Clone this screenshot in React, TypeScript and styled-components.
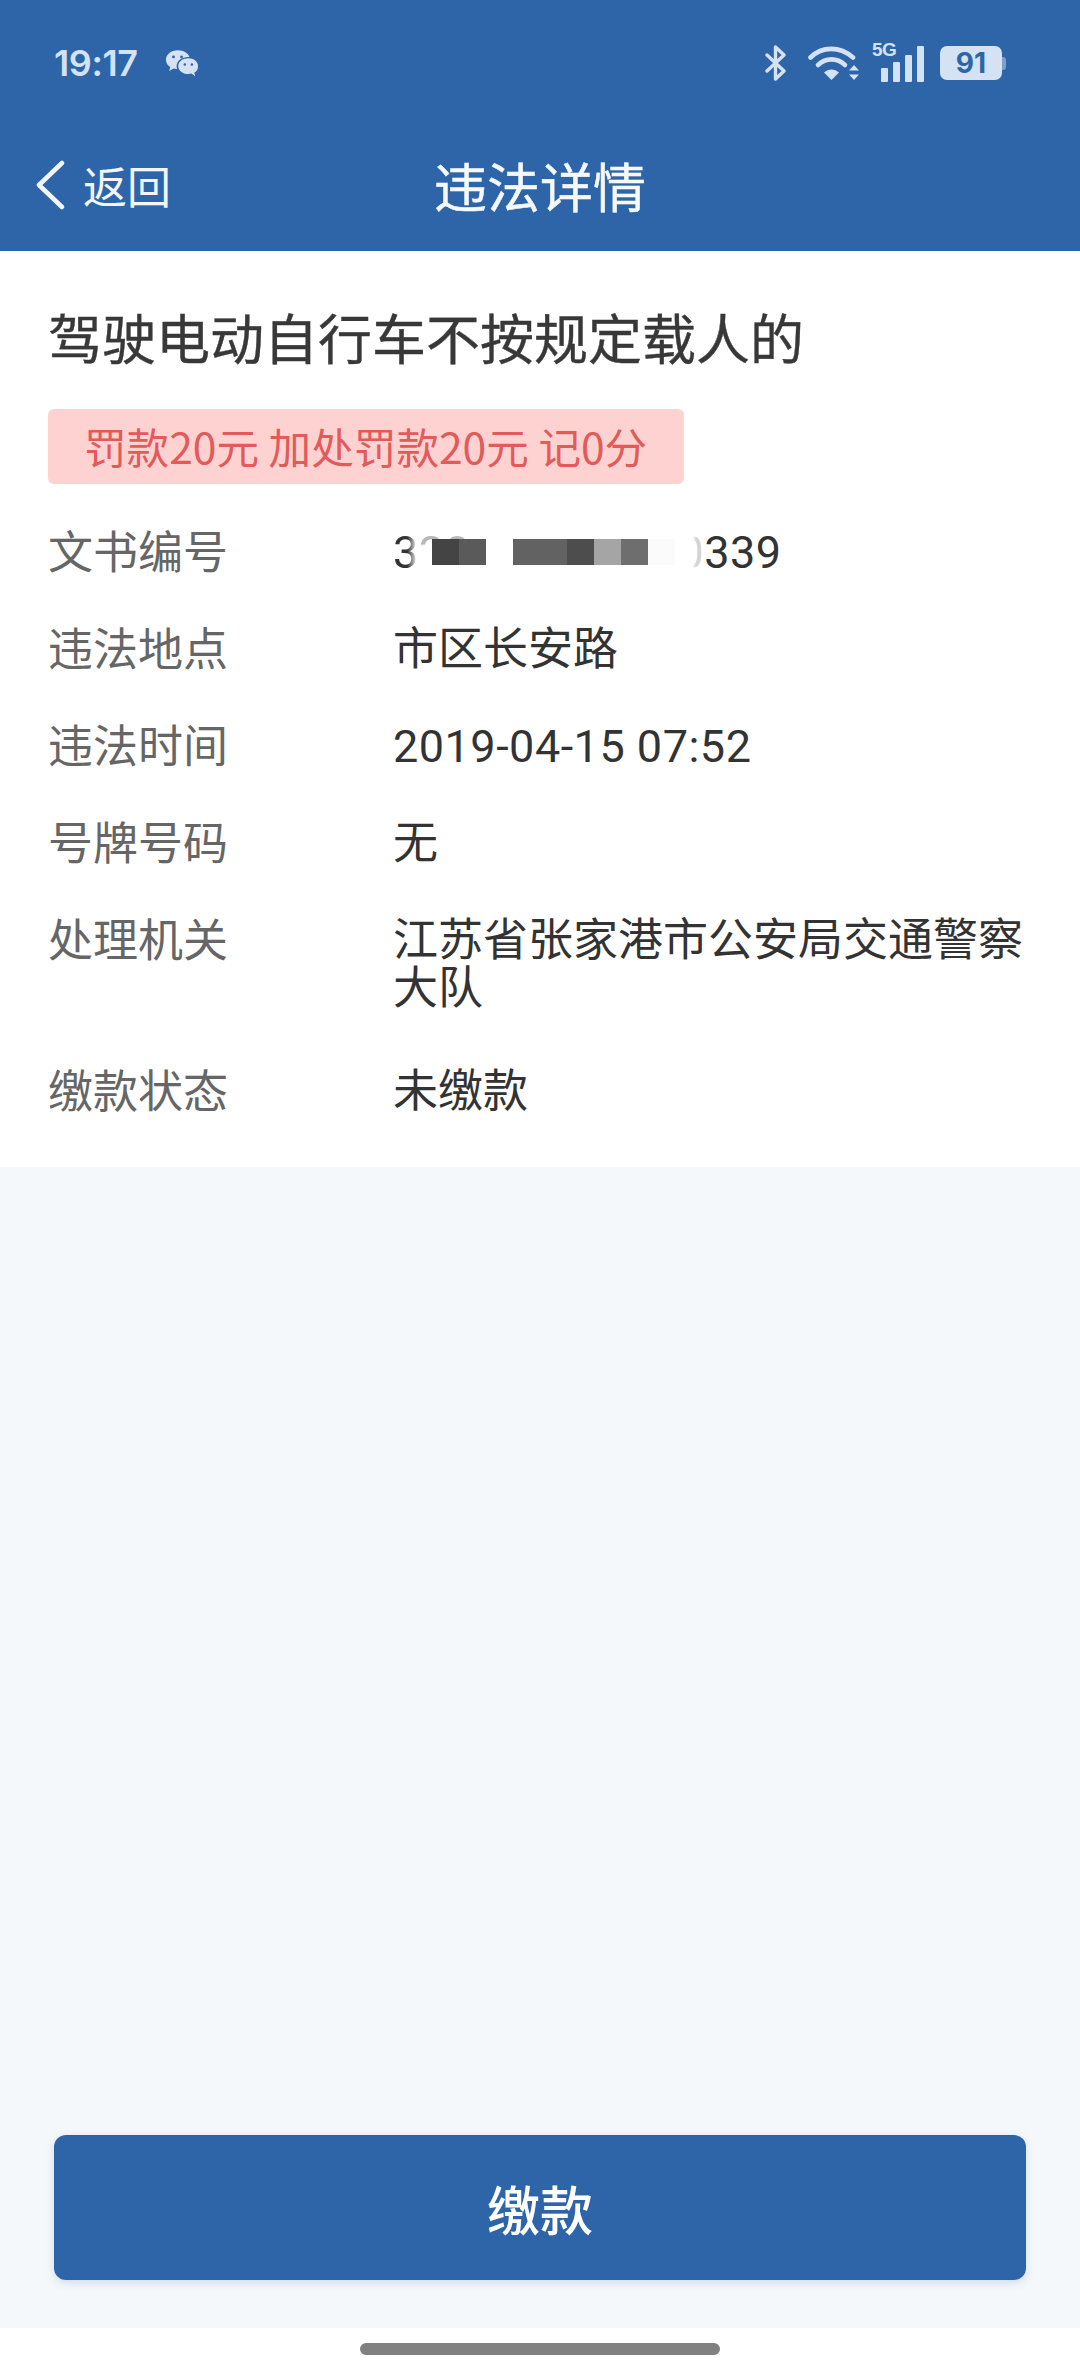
import React from 'react'
import styled, { createGlobalStyle } from 'styled-components'

const cjk = `'Noto Sans CJK SC', 'Noto Sans', sans-serif`
const latinCjk = `Roboto, 'Noto Sans CJK SC', sans-serif`
const blue = '#2d65a8'
const statusInk = '#d5e2f3'

const GlobalStyle = createGlobalStyle`
	html, body {
		margin: 0;
		padding: 0;
		background: #fff;
	}
	* {
		box-sizing: border-box;
	}
`

const rows = [
	{ label: '违法地点', value: '市区长安路' },
	{ label: '违法时间', value: '2019-04-15 07:52', numeric: true },
	{ label: '号牌号码', value: '无' },
	{ label: '处理机关', value: '江苏省张家港市公安局交通警察大队', wrapped: true },
	{ label: '缴款状态', value: '未缴款' },
]

const mosaicCells = [
	['#444444', '#5a5a5a'],
	['#626262', '#626262', '#4d4d4d', '#a5a5a5', '#6e6e6e', '#fbfbfb'],
]

export default function App() {
	return (
		<Page>
			<GlobalStyle />
			<Header>
				<StatusBar>
					<StatusLeft>
						<Clock>19:17</Clock>
						<WeChatIcon />
					</StatusLeft>
					<StatusRight>
						<BluetoothIcon />
						<WifiIcon />
						<SignalIcon />
						<Battery>
							<BatteryBody>91</BatteryBody>
							<BatteryNub />
						</Battery>
					</StatusRight>
				</StatusBar>
				<NavBar>
					<BackLink>
						<svg width="32" height="50" viewBox="0 0 32 50" fill="none">
							<path
								d="M28 3 L5 25 L28 47"
								stroke="#f2f6fb"
								strokeWidth="4.5"
								strokeLinecap="round"
								strokeLinejoin="round"
							/>
						</svg>
						<BackText>返回</BackText>
					</BackLink>
					<PageTitle>违法详情</PageTitle>
				</NavBar>
			</Header>
			<Card>
				<Title>驾驶电动自行车不按规定载人的</Title>
				<Penalty>罚款20元 加处罚款20元 记0分</Penalty>
				<Rows>
					<Row>
						<Label>文书编号</Label>
						<Value $numeric>
							<Masked>
								<FadedDigit>3</FadedDigit>
								<GhostDigits>20</GhostDigits>
								<MaskGap />
								<ClippedDigit>0</ClippedDigit>
								<span>339</span>
								<Mosaic>
									{mosaicCells.map((group, i) => (
										<MosaicGroup key={i}>
											{group.map((c, j) => (
												<MosaicCell key={j} $color={c} />
											))}
										</MosaicGroup>
									))}
								</Mosaic>
							</Masked>
						</Value>
					</Row>
					{rows.map((r) => (
						<Row key={r.label} $wrapped={r.wrapped}>
							<Label>{r.label}</Label>
							<Value $numeric={r.numeric}>{r.value}</Value>
						</Row>
					))}
				</Rows>
			</Card>
			<Body>
				<PayButton>缴款</PayButton>
			</Body>
			<GestureArea>
				<GesturePill />
			</GestureArea>
		</Page>
	)
}

function WeChatIcon() {
	return (
		<svg width="34" height="29" viewBox="0 0 36 30">
			<path
				d="M13.5 1C6.5 1 1 5.4 1 11c0 3.2 1.8 6 4.6 7.8L4.4 23l4.6-2.6c1.2.3 2.5.5 3.9.6-.4-1-.6-2-.6-3.100C12.300 11.700 18 8 24.500 8c.5 0 .9 0 1.300.1C24.700 4 19.600 1 13.500 1z"
				fill={statusInk}
			/>
			<path
				d="M24.700 9.500C18.800 9.500 14 13.200 14 17.800s4.800 8.300 10.700 8.300c1.200 0 2.300-.2 3.400-.5l3.900 3-1-3.900c2.700-1.500 4-3.800 4-6.900 0-4.600-4.400-8.300-10.300-8.300z"
				fill={statusInk}
			/>
			<circle cx="9" cy="8" r="1.500" fill={blue} />
			<circle cx="17.500" cy="8" r="1.500" fill={blue} />
			<circle cx="21" cy="16" r="1.300" fill={blue} />
			<circle cx="28.500" cy="16" r="1.300" fill={blue} />
		</svg>
	)
}

function BluetoothIcon() {
	return (
		<svg width="24" height="36" viewBox="0 0 24 36" fill="none">
			<path
				d="M3 10 L20 26 L11.500 34 V2 L20 10 L3 26"
				stroke={statusInk}
				strokeWidth="3.400"
				strokeLinejoin="round"
				strokeLinecap="round"
			/>
		</svg>
	)
}

function WifiIcon() {
	return (
		<svg width="52" height="36" viewBox="0 0 52 36" fill="none">
			<path d="M2.500 12.500C14 1 32 1 45 12.500" stroke={statusInk} strokeWidth="4.600" strokeLinecap="round" />
			<path d="M10 20C18 12.500 29 12.500 37 20" stroke={statusInk} strokeWidth="4.600" strokeLinecap="round" />
			<path d="M16 27.500C20.500 23.500 26.500 23.500 31 27.500L23.500 35z" fill={statusInk} />
			<path d="M46 20l5 5.500h-10zM46 35l-5-5.500h10z" fill={statusInk} />
		</svg>
	)
}

function SignalIcon() {
	return (
		<SignalWrap>
			<FiveG>5G</FiveG>
			<SignalBars>
				<SignalBar $h={14} />
				<SignalBar $h={20} />
				<SignalBar $h={27} />
				<SignalBar $h={36} />
			</SignalBars>
		</SignalWrap>
	)
}

const Page = styled.div`
	width: 1080px;
	min-height: 2376px;
	display: flex;
	flex-direction: column;
	background: #fff;
	font-family: ${cjk};
`

const Header = styled.header`
	height: 251px;
	background: ${blue};
	display: flex;
	flex-direction: column;
`

const StatusBar = styled.div`
	height: 126px;
	padding: 0 74px 0 54px;
	display: flex;
	align-items: center;
	justify-content: space-between;
`

const StatusLeft = styled.div`
	display: flex;
	align-items: center;
	gap: 27px;
`

const Clock = styled.span`
	font-family: Inter, Roboto, sans-serif;
	font-size: 36px;
	font-weight: 600;
	letter-spacing: -0.4px;
	color: ${statusInk};
`

const StatusRight = styled.div`
	display: flex;
	align-items: center;
	gap: 20px;
`

const SignalWrap = styled.div`
	position: relative;
	width: 52px;
	height: 38px;
	margin-left: -8px;
`

const FiveG = styled.span`
	position: absolute;
	left: 0;
	top: -4px;
	font-family: 'Liberation Sans', sans-serif;
	font-size: 19px;
	line-height: 20px;
	font-weight: 700;
	letter-spacing: -0.5px;
	color: ${statusInk};
`

const SignalBars = styled.div`
	position: absolute;
	right: 0;
	bottom: 0;
	display: flex;
	align-items: flex-end;
	gap: 5px;
`

const SignalBar = styled.div<{ $h: number }>`
	width: 7px;
	height: ${(p) => p.$h}px;
	border-radius: 1px;
	background: ${statusInk};
`

const Battery = styled.div`
	display: flex;
	align-items: center;
	margin-left: -4px;
`

const BatteryBody = styled.div`
	width: 62px;
	height: 34px;
	border-radius: 7px;
	background: ${statusInk};
	color: ${blue};
	font-family: Inter, Roboto, sans-serif;
	font-size: 28px;
	font-weight: 700;
	line-height: 34px;
	text-align: center;
`

const BatteryNub = styled.div`
	width: 4px;
	height: 13px;
	border-radius: 0 3px 3px 0;
	background: #7f9fc8;
`

const NavBar = styled.div`
	position: relative;
	flex: 1;
	display: flex;
	align-items: center;
	justify-content: center;
	padding-bottom: 7px;
`

const BackLink = styled.div`
	position: absolute;
	left: 34px;
	top: 34px;
	display: flex;
	align-items: center;
	gap: 17px;
`

const BackText = styled.span`
	font-size: 44px;
	line-height: 50px;
	color: #f2f6fb;
`

const PageTitle = styled.h1`
	margin: 0;
	font-size: 53px;
	line-height: 60px;
	font-weight: 400;
	-webkit-text-stroke: 0.5px #f5f8fc;
	color: #f5f8fc;
`

const Card = styled.section`
	padding: 56px 48px 51px;
	background: #fff;
`

const Title = styled.h2`
	margin: 0;
	font-size: 54px;
	line-height: 60px;
	font-weight: 400;
	-webkit-text-stroke: 0.4px #383838;
	color: #383838;
`

const Penalty = styled.div`
	margin-top: 42px;
	width: 636px;
	height: 75px;
	padding-left: 36px;
	border-radius: 6px;
	background: #ffd2d2;
	color: #e25b5b;
	font-size: 42.6px;
	line-height: 73px;
`

const Rows = styled.div`
	margin-top: 42px;
	display: flex;
	flex-direction: column;
	gap: 46px;
`

const Row = styled.div<{ $wrapped?: boolean }>`
	display: flex;
	font-size: 45px;
	line-height: 48px;
	margin-bottom: ${(p) => (p.$wrapped ? 6 : 0)}px;
`

const Label = styled.span`
	width: 345px;
	flex-shrink: 0;
	color: #666;
`

const Value = styled.span<{ $numeric?: boolean }>`
	flex: 1;
	padding-top: 3px;
	color: #333;
	font-family: ${latinCjk};
	letter-spacing: ${(p) => (p.$numeric ? 0.5 : 0)}px;
`

const Masked = styled.span`
	position: relative;
	display: flex;
	align-items: center;
`

const FadedDigit = styled.span`
	mask-image: linear-gradient(to right, #000 55%, transparent 95%);
`

const GhostDigits = styled.span`
	opacity: 0.35;
	mask-image: linear-gradient(to bottom, #000 30%, transparent 36%);
`

const MaskGap = styled.span`
	width: 208px;
`

const ClippedDigit = styled.span`
	opacity: 0.2;
	mask-image: linear-gradient(to right, transparent 55%, #000 70%);
`

const Mosaic = styled.span`
	position: absolute;
	left: 39px;
	top: 10px;
	display: flex;
	gap: 27px;
`

const MosaicGroup = styled.span`
	display: flex;
`

const MosaicCell = styled.span<{ $color: string }>`
	width: 27px;
	height: 26px;
	background: ${(p) => p.$color};
`

const Body = styled.main`
	flex: 1;
	display: flex;
	flex-direction: column;
	justify-content: flex-end;
	padding: 0 54px 48px;
	background: #f5f8fa;
`

const PayButton = styled.button`
	height: 145px;
	border: 0;
	border-radius: 12px;
	background: ${blue};
	box-shadow: 0 3px 8px rgba(45, 101, 168, 0.18);
	color: #fff;
	font-family: ${cjk};
	font-size: 53px;
	font-weight: 500;
`

const GestureArea = styled.div`
	height: 48px;
	padding-top: 15px;
	display: flex;
	justify-content: center;
	background: #fff;
`

const GesturePill = styled.div`
	width: 360px;
	height: 12px;
	border-radius: 6px;
	background: #808080;
`
